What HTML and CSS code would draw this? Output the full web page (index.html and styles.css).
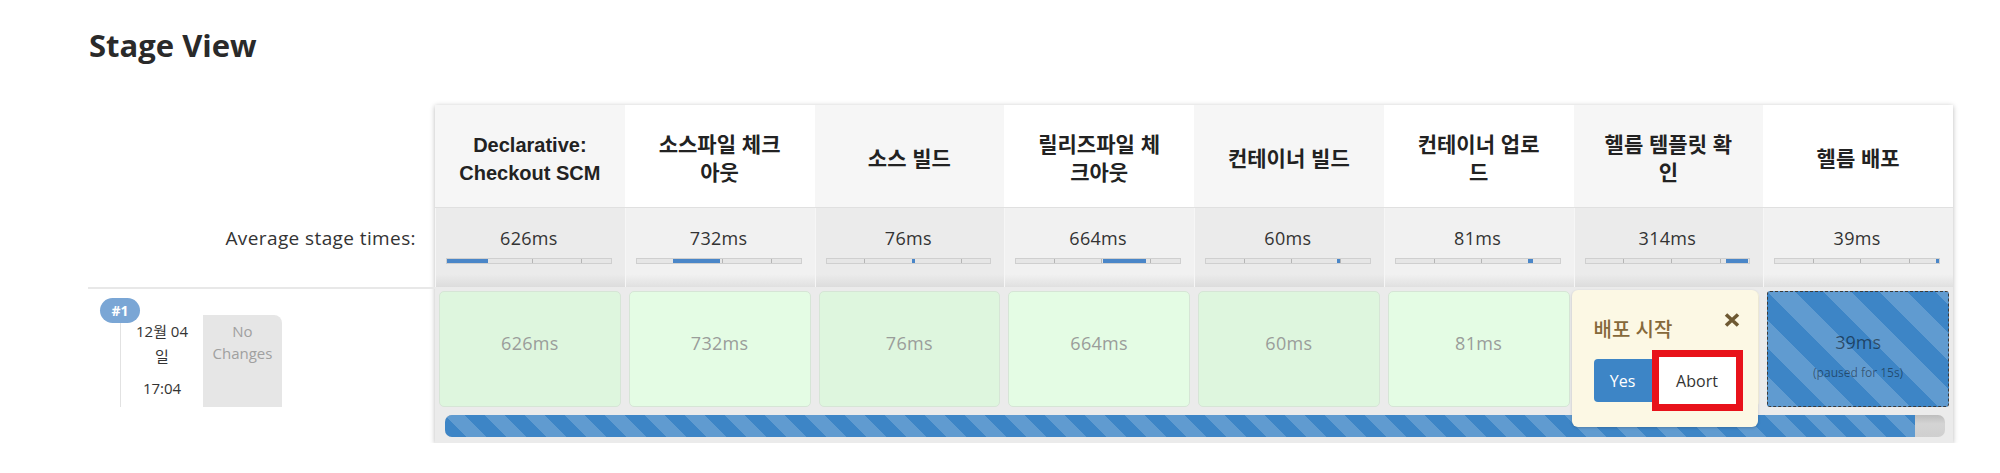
FILE: index.html
```html
<!DOCTYPE html>
<html lang="ko">
<head>
<meta charset="utf-8">
<title>Stage View</title>
<link rel="stylesheet" href="styles.css">
</head>
<body>
<main class="page">
  <h2 class="title">Stage View</h2>
  <div class="stage-view">
    <div class="side">
      <div class="side-head"></div>
      <div class="side-avg">Average stage times:</div>
      <div class="side-build">
        <span class="badge">#1</span>
        <div class="build-date">
          <div class="date">12월 04<br>일</div>
          <div class="time">17:04</div>
        </div>
        <div class="changes">No<br>Changes</div>
      </div>
    </div>

    <div class="table">
      <div class="row head">
        <div class="col latin"><span>Declarative:<br>Checkout SCM</span></div>
        <div class="col"><span>소스파일 체크<br>아웃</span></div>
        <div class="col"><span>소스 빌드</span></div>
        <div class="col"><span>릴리즈파일 체<br>크아웃</span></div>
        <div class="col"><span>컨테이너 빌드</span></div>
        <div class="col"><span>컨테이너 업로<br>드</span></div>
        <div class="col"><span>헬름 템플릿 확<br>인</span></div>
        <div class="col"><span>헬름 배포</span></div>
      </div>

      <div class="row avg">
        <div class="col"><div class="ms">626ms</div><div class="bar"><i class="fill" style="margin-left:0%;width:25%"></i></div></div>
        <div class="col"><div class="ms">732ms</div><div class="bar"><i class="fill" style="margin-left:22%;width:29%"></i></div></div>
        <div class="col"><div class="ms">76ms</div><div class="bar"><i class="fill" style="margin-left:52%;width:2%"></i></div></div>
        <div class="col"><div class="ms">664ms</div><div class="bar"><i class="fill" style="margin-left:53%;width:26%"></i></div></div>
        <div class="col"><div class="ms">60ms</div><div class="bar"><i class="fill" style="margin-left:80%;width:2%"></i></div></div>
        <div class="col"><div class="ms">81ms</div><div class="bar"><i class="fill" style="margin-left:81%;width:3%"></i></div></div>
        <div class="col"><div class="ms">314ms</div><div class="bar"><i class="fill" style="margin-left:86%;width:13%"></i></div></div>
        <div class="col"><div class="ms">39ms</div><div class="bar"><i class="fill" style="margin-left:98%;width:2%"></i></div></div>
      </div>

      <div class="row build">
        <div class="col"><div class="cell ok">626ms</div></div>
        <div class="col"><div class="cell ok">732ms</div></div>
        <div class="col"><div class="cell ok">76ms</div></div>
        <div class="col"><div class="cell ok">664ms</div></div>
        <div class="col"><div class="cell ok">60ms</div></div>
        <div class="col"><div class="cell ok">81ms</div></div>
        <div class="col">
          <div class="cell input">
            <div class="popup">
              <div class="popup-head">
                <span class="popup-title">배포 시작</span>
                <svg class="close" width="18" height="14" viewBox="0 0 18 14" aria-hidden="true">
                  <path d="M3 1.5 L15 12.5 M15 1.5 L3 12.5" stroke="#6e5932" stroke-width="3.6" fill="none"/>
                </svg>
              </div>
              <div class="popup-actions">
                <button class="btn yes">Yes</button>
                <button class="btn abort">Abort</button>
              </div>
            </div>
          </div>
        </div>
        <div class="col">
          <div class="cell paused">
            <span class="pms">39ms</span>
            <span class="note">(paused for 15s)</span>
          </div>
        </div>
      </div>

      <div class="progress">
        <div class="track"><div class="track-fill" style="width:98%"></div></div>
      </div>
    </div>
  </div>
</main>
</body>
</html>
```

FILE: styles.css
```css
* { box-sizing: border-box; }

body {
  margin: 0;
  background: #fff;
  font-family: "Open Sans", "Noto Sans CJK KR", sans-serif;
  color: #333;
}

.page {
  padding: 25px 0 0 88px;
}

.title {
  margin: 0;
  padding-left: 1px;
  font-size: 31px;
  line-height: 40px;
  font-weight: 700;
  color: #2a2a2a;
}

.stage-view {
  display: flex;
  margin-top: 40px;
}

/* ---------- left labels ---------- */
.side {
  width: 347px;
  flex: none;
}

.side-head { height: 103px; }

.side-avg {
  height: 79px;
  padding: 16px 19px 0 0;
  text-align: right;
  font-size: 19px;
  letter-spacing: 0.4px;
  line-height: 28px;
  white-space: nowrap;
  color: #333;
}

.side-build {
  position: relative;
  height: 120px;
  overflow: hidden;
  border-top: 2px solid #e8e8e8;
  display: flex;
  align-items: flex-start;
  padding: 24px 0 0 32px;
}

.badge {
  position: absolute;
  left: 12px;
  top: 9px;
  width: 40px;
  height: 25px;
  border-radius: 13px;
  background: #7aa6d5;
  color: #fff;
  font-size: 14px;
  font-weight: 700;
  line-height: 25px;
  text-align: center;
  z-index: 1;
}

.build-date {
  width: 83px;
  height: 100px;
  border-left: 1px solid #e2e2e2;
  background: #fff;
  text-align: center;
  font-size: 15px;
  line-height: 25px;
  color: #333;
  padding-top: 6px;
}

.time { margin-top: 7px; }

.changes {
  width: 79px;
  height: 100px;
  margin-top: 2px;
  background: #e6e6e6;
  border-radius: 0 8px 0 0;
  text-align: center;
  font-size: 15px;
  line-height: 22px;
  color: #a0a0a0;
  padding-top: 5px;
}

/* ---------- table ---------- */
.table {
  width: 1518px;
  flex: none;
  background: #ebebeb;
  box-shadow: 0 1px 5px rgba(0, 0, 0, 0.28);
}

.row {
  display: grid;
  grid-template-columns: repeat(8, 1fr);
}

.head {
  height: 103px;
  border-bottom: 1px solid #e0e0e0;
}

.head .col {
  display: flex;
  align-items: center;
  justify-content: center;
  padding: 5px 8px 0;
  text-align: center;
  font-family: "Liberation Sans", "Noto Sans CJK KR", sans-serif;
  font-size: 21px;
  line-height: 28px;
  font-weight: 700;
  color: #222;
  white-space: nowrap;
  background: #f6f6f6;
}

.head .col.latin { font-size: 20px; }

.head .col:nth-child(even) { background: #fff; }

.avg { height: 79px; }

.avg .col {
  padding: 16px 13px 0 10px;
  text-align: center;
  background: linear-gradient(#ebebeb, #ebebeb 84%, #dcdcdc);
  border-left: 1px solid #f6f6f6;
}

.avg .col:nth-child(even) {
  background: linear-gradient(#f1f1f1, #f1f1f1 84%, #e0e0e0);
}

.avg .ms {
  font-size: 18px;
  letter-spacing: 0.3px;
  line-height: 28px;
  color: #333;
}

.bar {
  display: flex;
  height: 6px;
  margin-top: 6px;
  border: 1px solid #cfcfcf;
  background-color: #e6e6e6;
  background-image:
    linear-gradient(to right, transparent 23%, #b5b5b5 23%, #b5b5b5 23.6%, transparent 23.6%),
    linear-gradient(to right, transparent 52%, #b5b5b5 52%, #b5b5b5 52.6%, transparent 52.6%),
    linear-gradient(to right, transparent 82%, #b5b5b5 82%, #b5b5b5 82.6%, transparent 82.6%);
}

.bar .fill {
  display: block;
  height: 100%;
  background: #4a86c8;
}

/* build row */
.build {
  height: 124px;
}

.build .col {
  padding: 4px;
  background: #ebebeb;
}

.cell {
  height: 116px;
  border-radius: 5px;
  text-align: center;
}

.cell.ok {
  border: 1px solid #d6e5d6;
  background: #def6de;
  padding-top: 37px;
  font-size: 18px;
  letter-spacing: 0.3px;
  line-height: 28px;
  color: #9a9d9a;
}

.build .col:nth-child(even) .cell.ok { background: #e4fce4; }

.cell.input {
  position: relative;
  background: #fcf8e3;
}

.popup {
  position: absolute;
  left: -6px;
  top: -1px;
  width: 186px;
  height: 137px;
  z-index: 2;
  background: #fcf8e4;
  border-radius: 6px;
  box-shadow: 0 1px 3px rgba(0, 0, 0, 0.18);
  padding: 27px 15px 16px 22px;
  text-align: left;
}

.popup-head {
  display: flex;
  justify-content: space-between;
  align-items: flex-start;
}

.popup-title {
  font-size: 20px;
  line-height: 26px;
  font-weight: 500;
  color: #86693a;
}

.close {
  margin: -4px 2px 0 0;
}

.popup-actions {
  display: flex;
  align-items: center;
  margin-top: 7px;
}

.btn {
  font-family: "Open Sans", sans-serif;
  font-size: 16px;
  padding: 0;
  margin: 0;
  cursor: pointer;
}

.btn.yes {
  width: 58px;
  height: 43px;
  border: 0;
  border-radius: 4px 0 0 4px;
  background: #3d85c6;
  color: #fff;
}

.btn.abort {
  width: 91px;
  height: 61px;
  border: 7px solid #e8121a;
  background: #fff;
  color: #333;
}

.cell.paused {
  display: flex;
  flex-direction: column;
  align-items: center;
  border: 1px dashed #3a3a3a;
  border-radius: 3px;
  padding-top: 36px;
  background-color: #3d85c6;
  background-image: linear-gradient(45deg,
    rgba(255,255,255,0.18) 25%, transparent 25%, transparent 50%,
    rgba(255,255,255,0.18) 50%, rgba(255,255,255,0.18) 75%, transparent 75%, transparent);
  background-size: 56px 56px;
}

.pms {
  font-size: 18px;
  line-height: 28px;
  color: rgba(0, 0, 0, 0.5);
}

.note {
  margin-top: 9px;
  font-size: 12px;
  line-height: 16px;
  color: rgba(0, 0, 0, 0.45);
}

/* progress */
.progress {
  height: 32px;
  padding: 4px 8px 6px 10px;
  background: #ebebeb;
}

.track {
  height: 22px;
  border-radius: 7px;
  background: linear-gradient(#bdbdbd, #d4d4d4 40%, #cfcfcf);
  overflow: hidden;
}

.track-fill {
  height: 100%;
  background-color: #3d85c6;
  background-image: linear-gradient(45deg,
    rgba(255,255,255,0.18) 25%, transparent 25%, transparent 50%,
    rgba(255,255,255,0.18) 50%, rgba(255,255,255,0.18) 75%, transparent 75%, transparent);
  background-size: 40px 40px;
}
```
